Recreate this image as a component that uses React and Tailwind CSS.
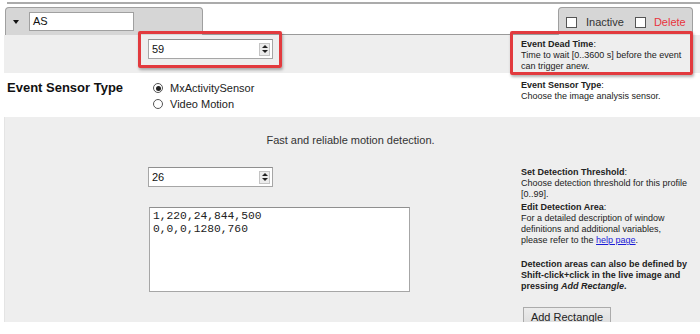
import React from "react";

function Spinner() {
  return (
    <span className="ml-auto mr-[2px] w-[11px] h-[13px] border border-[#c4c4c4] bg-[#ececec] flex flex-col items-center justify-center gap-[2px]">
      <span className="w-0 h-0 border-x-[3px] border-x-transparent border-b-[3px] border-b-[#222]" />
      <span className="w-0 h-0 border-x-[3px] border-x-transparent border-t-[3px] border-t-[#222]" />
    </span>
  );
}

function NumberInput({ value }) {
  return (
    <div className="w-[125px] h-[20px] bg-white border border-[#a6a6a6] border-t-[#8f8f8f] flex items-center">
      <span className="pl-[3px] text-[11px] text-[#111]">{value}</span>
      <Spinner />
    </div>
  );
}

function Box() {
  return <span className="w-[11px] h-[11px] bg-white border border-[#555] shrink-0" />;
}

function Radio({ checked }) {
  return (
    <span className="w-[10px] h-[10px] rounded-full border border-[#555] bg-white flex items-center justify-center shrink-0">
      {checked && <span className="w-[5px] h-[5px] rounded-full bg-[#222]" />}
    </span>
  );
}

export default function App() {
  return (
    <div className="w-[700px] h-[334px] bg-white relative overflow-hidden font-['Liberation_Sans',Arial,sans-serif] text-[#1a1a1a]">
      {/* header */}
      <div className="h-[2px]" />
      <div className="ml-[7px] h-[2px] bg-[#ababab]" />
      <div className="flex items-end h-[31px]">
        <div className="w-[5px]" />
        <div className="w-[198px] h-[28px] bg-[#d6d6d6] border border-b-0 border-[#9f9f9f] rounded-t-[4px] flex items-start pt-[4px] pl-[7px] relative z-10">
          <span className="mt-[8px] w-0 h-0 border-x-[3.5px] border-x-transparent border-t-[4px] border-t-[#111]" />
          <div className="ml-[10px] w-[105px] h-[19px] bg-white border border-[#a0a0a0] flex items-center pl-[3px] text-[11px] text-[#111]">
            AS
          </div>
        </div>
        <div className="flex-1 self-stretch border-b border-[#9a9a9a]" />
        <div className="w-[135px] h-[28px] bg-[#d6d6d6] border border-b-0 border-[#9f9f9f] rounded-t-[4px] pt-[9px] pl-[7px] relative z-10">
          <div className="flex items-center h-[11px] text-[11px]">
            <Box />
            <span className="ml-[9px] text-[#333]">Inactive</span>
            <span className="ml-[11px] flex"><Box /></span>
            <span className="ml-[8px] text-[#e8333c]">Delete</span>
          </div>
        </div>
        <div className="w-[7px]" />
      </div>

      {/* row 1: dead time */}
      <div className="ml-[4px] h-[38px] bg-[#eeeeee] flex pt-[4px]">
        <div className="w-[144px]" />
        <div className="w-[373px]">
          <NumberInput value="59" />
        </div>
        <div className="text-[9px] leading-[11px] whitespace-nowrap text-[#222]">
          <b>Event Dead Time</b>:<br />
          Time to wait [0..3600 s] before the event<br />
          can trigger anew.
        </div>
      </div>

      {/* row 2: sensor type */}
      <div className="ml-[4px] h-[44px] bg-white flex pt-[7px]">
        <div className="w-[144px] pl-[3px] text-[13px] leading-[16px] font-bold text-[#111]">Event Sensor Type</div>
        <div className="w-[373px] pl-[5px] text-[11px] leading-[16px] text-[#222]">
          <div className="flex items-center gap-[7px]">
            <Radio checked />
            <span>MxActivitySensor</span>
          </div>
          <div className="flex items-center gap-[7px]">
            <Radio />
            <span>Video Motion</span>
          </div>
        </div>
        <div className="text-[9px] leading-[11px] whitespace-nowrap text-[#222]">
          <b>Event Sensor Type</b>:<br />
          Choose the image analysis sensor.
        </div>
      </div>

      {/* row 3: MxActivitySensor settings */}
      <div className="ml-[4px] h-[205px] bg-[#eeeeee] overflow-hidden border-l border-[#e4e4e4]">
        <div className="pt-[16px] pr-[4px] text-center text-[11px] leading-[14px] text-[#333]">
          Fast and reliable motion detection.
        </div>
        <div className="mt-[20px] flex h-[35px]">
          <div className="w-[143px]" />
          <div className="w-[373px]">
            <NumberInput value="26" />
          </div>
          <div className="text-[9px] leading-[11px] whitespace-nowrap text-[#222] -mt-[0.5px]">
            <b>Set Detection Threshold</b>:<br />
            Choose detection threshold for this profile<br />
            [0..99].
          </div>
        </div>
        <div className="flex">
          <div className="w-[144px]" />
          <div className="w-[372px]">
            <textarea
              readOnly
              className="mt-[5px] w-[261px] h-[85px] bg-white border border-[#a6a6a6] border-t-[#8f8f8f] pl-[3px] pt-[2px] font-['Liberation_Mono','Courier_New',monospace] text-[11.3px] leading-[12.5px] text-[#222] resize-none outline-none"
              value={"1,220,24,844,500\n0,0,0,1280,760"}
            />
          </div>
          <div className="text-[9px] leading-[11px] whitespace-nowrap text-[#222]">
            <b>Edit Detection Area</b>:<br />
            For a detailed description of window<br />
            definitions and additional variables,<br />
            please refer to the <span className="text-[#1a1ad6] underline">help page</span>.
            <p className="mt-[13px] font-bold">
              Detection areas can also be defined by<br />
              Shift-click+click in the live image and<br />
              pressing <i>Add Rectangle</i>.
            </p>
            <button className="mt-[15px] ml-[2px] w-[88px] h-[20px] bg-[linear-gradient(#ececec,#dcdcdc)] border border-[#ababab] text-[11px] text-[#222] leading-[14px] flex items-center justify-center">
              Add Rectangle
            </button>
          </div>
        </div>
      </div>

      {/* annotation boxes */}
      <div className="absolute left-[138px] top-[31px] w-[144px] h-[37px] border-[3px] border-[#e23a3e] rounded-[2px] shadow-[1px_2px_3px_rgba(0,0,0,0.3)] z-20" />
      <div className="absolute left-[510px] top-[31px] w-[183px] h-[44px] border-[3px] border-[#e23a3e] rounded-[2px] shadow-[1px_2px_3px_rgba(0,0,0,0.3)] z-20" />
    </div>
  );
}
